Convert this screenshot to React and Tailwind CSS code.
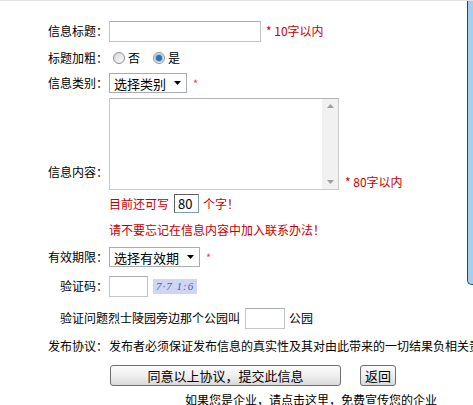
import React from 'react';

const red = 'text-[#c40000]';

const Label = ({ children, className = '' }) => (
  <div className={`w-[108px] shrink-0 text-right ${className}`}>{children}</div>
);

const Select = ({ text, width }) => (
  <div className={`${width} h-[20px] border border-[#a5acb2] bg-white flex items-center pl-[4px] pr-[5px] justify-between`}>
    <span className="text-[13px]">{text}</span>
    <svg width="7" height="4" viewBox="0 0 7 4"><path d="M0 0h7L3.5 4z" fill="#000" /></svg>
  </div>
);

const Radio = ({ checked }) => (
  <span className="w-[12px] h-[12px] rounded-full border border-[#8a8f95] bg-gradient-to-br from-[#d8d8d8] to-[#fbfbfb] flex items-center justify-center">
    {checked && <span className="w-[6px] h-[6px] rounded-full bg-[#2f6eb0] ring-1 ring-[#8fc0ea]" />}
  </span>
);

const Box = ({ width, children }) => (
  <div className={`${width} h-[21px] border border-[#c2c6ca] border-t-[#a9adb1] bg-white flex items-center px-[4px] text-[13px]`}>
    {children}
  </div>
);

const Btn = ({ children, className = '' }) => (
  <div className={`h-[21px] border border-[#6f6f6f] rounded-[3px] bg-gradient-to-b from-[#fbfbfb] via-[#efefef] to-[#d9d9d9] flex items-center justify-center text-[13px] ${className}`}>
    {children}
  </div>
);

export default function App() {
  return (
    <div
      className="relative w-[473px] h-[405px] overflow-hidden bg-white text-black text-[12px] leading-none border-t border-[#e2e2e2]"
      style={{ fontFamily: '"Noto Sans CJK SC", "Liberation Sans", sans-serif' }}
    >
      <div className="h-[18px]" />

      {/* 信息标题 */}
      <div className="h-[24px] flex items-center">
        <Label>信息标题：</Label>
        <div className="ml-[1px] w-[152px] h-[21px] border border-[#c2c6ca] border-t-[#a9adb1] bg-white" />
        <span className={`ml-[5px] ${red}`}>* 10字以内</span>
      </div>

      {/* 标题加粗 */}
      <div className="h-[29px] flex items-center">
        <Label>标题加粗：</Label>
        <div className="ml-[5px] flex items-center">
          <Radio />
          <span className="ml-[3px]">否</span>
          <span className="ml-[13px]"><Radio checked /></span>
          <span className="ml-[3px]">是</span>
        </div>
      </div>

      {/* 信息类别 */}
      <div className="h-[22px] flex items-center">
        <Label>信息类别：</Label>
        <div className="ml-[1px]"><Select text="选择类别" width="w-[78px]" /></div>
        <span className="ml-[6px] text-[#e04848] text-[11px]">*</span>
      </div>

      <div className="h-[4px]" />

      {/* 信息内容 */}
      <div className="h-[146px] flex items-center">
        <Label className="pt-[2px]">信息内容：</Label>
        <div className="ml-[1px] flex flex-col self-stretch">
          <div className="flex items-end">
            <div className="w-[230px] h-[92px] border border-[#c8cbce] border-t-[#b0b3b6] bg-white flex justify-end">
              <div className="w-[16px] h-full bg-[#f1f1f1] flex flex-col justify-between items-center py-[5px]">
                <svg width="7" height="4" viewBox="0 0 7 4"><path d="M0 4h7L3.5 0z" fill="#a0a0a0" /></svg>
                <svg width="7" height="4" viewBox="0 0 7 4"><path d="M0 0h7L3.5 4z" fill="#a0a0a0" /></svg>
              </div>
            </div>
            <span className={`ml-[6px] mb-[2px] ${red}`}>* 80字以内</span>
          </div>
          <div className="h-[27px] flex items-center">
            <span className={red}>目前还可写</span>
            <div className="ml-[5px] w-[25px] h-[19px] border border-[#7f9db9] border-l-[#5f5f5f] border-t-[#5f5f5f] bg-white flex items-center pl-[3px] text-[13px]">80</div>
            <span className={`ml-[4px] ${red}`}>个字！</span>
          </div>
          <div className={`h-[25px] flex items-center ${red}`}>请不要忘记在信息内容中加入联系办法！</div>
        </div>
      </div>

      {/* 有效期限 */}
      <div className="h-[26px] flex items-center">
        <Label>有效期限：</Label>
        <div className="ml-[1px]"><Select text="选择有效期" width="w-[91px]" /></div>
        <span className="ml-[6px] text-[#e04848] text-[11px]">*</span>
      </div>

      {/* 验证码 */}
      <div className="h-[32px] flex items-center">
        <Label>验证码：</Label>
        <div className="ml-[1px]"><Box width="w-[39px]" /></div>
        <span
          className="ml-[5px] h-[15px] px-[3px] bg-[#cfd6f3] text-[#4d5fa5] text-[11px] italic flex items-center tracking-[1px]"
          style={{ fontFamily: '"Liberation Serif", serif' }}
        >
          7·7 1:6
        </span>
      </div>

      {/* 验证问题 */}
      <div className="h-[32px] flex items-center">
        <Label>验证问题</Label>
        <span>烈士陵园旁边那个公园叫</span>
        <div className="ml-[5px]"><Box width="w-[40px]" /></div>
        <span className="ml-[4px]">公园</span>
      </div>

      {/* 发布协议 */}
      <div className="h-[24px] flex items-center whitespace-nowrap">
        <Label>发布协议：</Label>
        <span className="ml-[1px]">发布者必须保证发布信息的真实性及其对由此带来的一切结果负相关责任</span>
      </div>

      {/* buttons */}
      <div className="h-[34px] flex items-center">
        <Btn className="ml-[110px] w-[231px]">同意以上协议，提交此信息</Btn>
        <Btn className="ml-[19px] w-[36px] text-[12px]">返回</Btn>
      </div>

      <div className="h-[16px] flex items-center pl-[185px] whitespace-nowrap">
        如果您是企业，请点击这里，免费宣传您的企业
      </div>

      {/* floating side panel at right edge */}
      <div className="absolute right-0 top-[-1px] w-[6px] h-[285px] border-l border-b border-[#1d4d5c] rounded-bl-[5px] bg-[#a4d0f0]" />
    </div>
  );
}
